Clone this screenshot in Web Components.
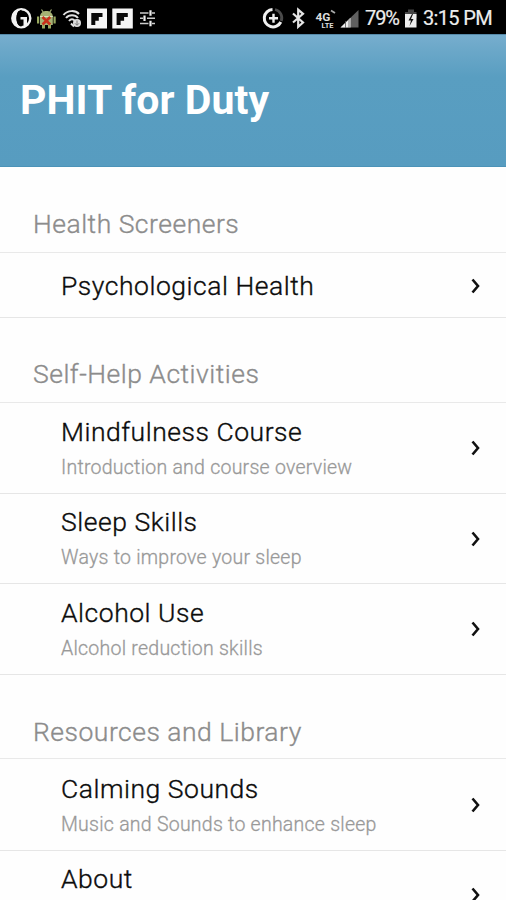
<!DOCTYPE html>
<html lang="en">
<head>
<meta charset="utf-8">
<title>PHIT for Duty</title>
<style>
html, body { margin: 0; height: 900px; overflow: hidden; background: #fefefe; font-family: Roboto, "Liberation Sans", sans-serif; }
</style>
</head>
<body>
<phit-app></phit-app>

<template id="status-tpl">
<style>
:host { display: flex; height: 34px; background: #000; color: #ededed; justify-content: space-between; align-items: center; box-sizing: border-box; padding: 1px 14px 0 10px; font-size: 20px; line-height: 34px; -webkit-text-stroke: .2px #ededed; }
.group { display: flex; align-items: center; height: 34px; }
svg { display: block; flex: none; }
.pct { letter-spacing: -1.1px; }
.time { letter-spacing: -.65px; margin-left: 6px; }
.bat { margin-left: 6px; }
</style>
<div class="group">
  <svg width="150" height="34" viewBox="10 0 150 34">
    <circle cx="21.300" cy="17.200" r="9" fill="none" stroke="#f2f2f2" stroke-width="2.400"/>
    <path d="M20.500 8C13.500 9 12 13 12 17s2.500 8 8.500 9c-3-2-4-5-4-9s1-7 4-9z" fill="#f2f2f2"/>
    <path d="M21.500 9.500c-3 1.300-4.300 4-4.300 7.700s1.300 6.500 4.300 7.700" fill="none" stroke="#000" stroke-width="1.600"/>
    <path d="M20.500 16h6.500v8l-3.500 2v-7.500h-3z" fill="#f2f2f2"/>
    <path d="M41.500 8.500l2 3M51.500 8.500l-2 3" stroke="#a2ad74" stroke-width="1.200"/>
    <path d="M40 15.500c0-7.500 12.800-7.500 12.800 0v8.500H40z" fill="#a6b274"/>
    <path d="M37 15.500h2.200v7H37zM53.500 15.500h2.200v7h-2.200zM42 24h3v3.500h-3zM48 24h3v3.500h-3z" fill="#98a85f"/>
    <path d="M40 15.500h12.800" stroke="#dbe2bd"/>
    <path d="M42.500 16l7.700 7.500M50.200 16l-7.700 7.500" stroke="#c8301a" stroke-width="2.600"/>
    <g fill="none" stroke="#e2e2e2" stroke-width="2">
      <path d="M63.500 14c4-5 12-5 15.500-1M66 17c3-3.800 9-3.800 12 0M69 20c2-2.500 4-2.500 6 0M71 22.500l3 3"/>
    </g>
    <circle cx="77" cy="22" r="4" fill="#ddd"/>
    <path d="M77 19.500v4.500M75 22.300l2 2 2-2" stroke="#777" fill="none"/>
    <path d="M87 7.500h20v20H87zM112.300 7.500h20.500v20h-20.500z" fill="#f5f5f5"/>
    <path d="M91.300 12h11.200v4h-3.700v3.700h-3.500v4.300h-4zM116.600 12h11.200v4h-3.700v3.700h-3.500v4.300h-4z" fill="#0a0a0a"/>
    <g stroke="#ccc" stroke-width="1.600" fill="none">
      <path d="M140 12h8.500M152 12h3M140 17.200h3M147 17.200h8M140 22.500h8.500M152 22.500h3"/>
      <path d="M150.500 9.300v5.500M144.500 14.500v5.500M150.500 19.700v5.500" stroke="#eee" stroke-width="2.200"/>
    </g>
  </svg>
</div>
<div class="group">
  <svg width="104" height="34" viewBox="261 0 104 34">
    <path d="M272.500 8.500a8.700 8.700 0 1 0 8.300 12.500" fill="none" stroke="#f0f0f0" stroke-width="3"/>
    <path d="M275 8.500a8.700 8.700 0 0 1 6.300 11.500" fill="none" stroke="#4a4a4a" stroke-width="2.800"/>
    <path d="M269 17.200h9M273.500 12.700v9" stroke="#f0f0f0" stroke-width="2.400"/>
    <path d="M293 12.500l10 9-4.800 4.300V8.700l4.800 4.100-10 8.700" fill="none" stroke="#e5e5e5" stroke-width="2.200"/>
    <g fill="#ddd" stroke="none" font-family="Roboto, sans-serif" font-weight="700">
      <text x="315.500" y="20" font-size="10" textLength="15" lengthAdjust="spacingAndGlyphs">4G</text>
      <text x="321.500" y="26.500" font-size="7" textLength="12" lengthAdjust="spacingAndGlyphs">LTE</text>
    </g>
    <path d="M331 9.500l4 2.500" stroke="#aaa" stroke-width="1.800"/>
    <path d="M340.500 26.500L358.500 9v17.500z" fill="#606060"/>
    <path d="M340.500 26.500l10-9.700v9.700z" fill="#eee"/>
    <path d="M345.500 20v7M349 18v9" stroke="#555" stroke-width=".8"/>
  </svg>
  <span class="pct">79%</span>
  <svg class="bat" width="12" height="34" viewBox="405 0 12 34">
    <path d="M408 8.500h6v2.500h2.500v6h-11.500v-6h3z" fill="#444"/>
    <path d="M405 13h11.500v13.500H405z" fill="#eee"/>
    <path d="M412 13l-3.500 6.500h2.500L409.500 25l4-7H411l2-5z" fill="#111"/>
  </svg>
  <span class="time">3:15 PM</span>
</div>
</template>

<template id="header-tpl">
<style>
:host { display: flex; align-items: center; height: 133px; box-sizing: border-box; padding: 0 20px 1px; color: #fff; background: linear-gradient(#77aece 0, #6ca8c9 14px, #599ec1 42px, #579cc0 100%); border-top: 1px solid #5589a8; border-bottom: 1px solid #4c93b8; font: 700 41px/48px Roboto, sans-serif; }
h1 { margin: 0; font: inherit; letter-spacing: .05px; }
</style>
<h1><slot></slot></h1>
</template>

<template id="section-tpl">
<style>
:host { display: block; }
h2 { margin: 0; height: var(--head, 85px); box-sizing: border-box; display: flex; align-items: flex-end; padding: 0 33px var(--drop, 12px); border-bottom: 1px solid #e9e9e9; color: #8c8c8c; font: 300 26.5px/32px Roboto, sans-serif; letter-spacing: .5px; -webkit-text-stroke: .35px #8c8c8c; }
</style>
<h2></h2><slot></slot>
</template>

<template id="row-tpl">
<style>
:host { display: flex; align-items: center; justify-content: space-between; height: var(--h, 91px); box-sizing: border-box; padding: var(--top, 0) 25px 0 61px; border-bottom: 1px solid #e6e6e6; }
.title { color: #0c0c0c; font: 300 26.5px/30px Roboto, sans-serif; letter-spacing: .53px; -webkit-text-stroke: .35px #0c0c0c; }
.sub { height: 24px; margin-top: 9px; color: #999; font: 300 19.5px/24px Roboto, sans-serif; letter-spacing: .25px; -webkit-text-stroke: .3px #999; }
:host(:not([sub])) .sub { display: none; }
svg { display: block; }
</style>
<div><div class="title"><slot></slot></div><div class="sub"></div></div>
<svg width="10" height="18" viewBox="0 0 10 18"><path d="M1.500 2.500L7 9l-5.500 6.500" fill="none" stroke="#111" stroke-width="2.600"/></svg>
</template>

<template id="app-tpl">
<style>
:host { display: flex; flex-direction: column; width: 506px; height: 900px; overflow: hidden; }
:host > * { flex: none; }
</style>
<status-bar></status-bar>
<app-header>PHIT for Duty</app-header>
<list-section label="Health Screeners" style="--head:86px">
  <list-row style="--h:65px;--top:2px">Psychological Health</list-row>
</list-section>
<list-section label="Self-Help Activities">
  <list-row sub="Introduction and course overview">Mindfulness Course</list-row>
  <list-row style="--h:90px" sub="Ways to improve your sleep">Sleep Skills</list-row>
  <list-row sub="Alcohol reduction skills">Alcohol Use</list-row>
</list-section>
<list-section label="Resources and Library" style="--head:84px;--drop:10px">
  <list-row style="--h:92px;--top:1px" sub="Music and Sounds to enhance sleep">Calming Sounds</list-row>
  <list-row style="--h:89px" sub="">About</list-row>
</list-section>
</template>

<script>
const define = (name, id, setup) => customElements.define(name, class extends HTMLElement {
  connectedCallback() {
    if (this.shadowRoot) return;
    const root = this.attachShadow({ mode: 'open' });
    root.append(document.getElementById(id).content.cloneNode(true));
    if (setup) setup(this, root);
  }
});
define('status-bar', 'status-tpl');
define('app-header', 'header-tpl');
define('list-section', 'section-tpl', (el, root) => { root.querySelector('h2').textContent = el.getAttribute('label'); });
define('list-row', 'row-tpl', (el, root) => { root.querySelector('.sub').textContent = el.getAttribute('sub') || ''; });
define('phit-app', 'app-tpl');
</script>
</body>
</html>
